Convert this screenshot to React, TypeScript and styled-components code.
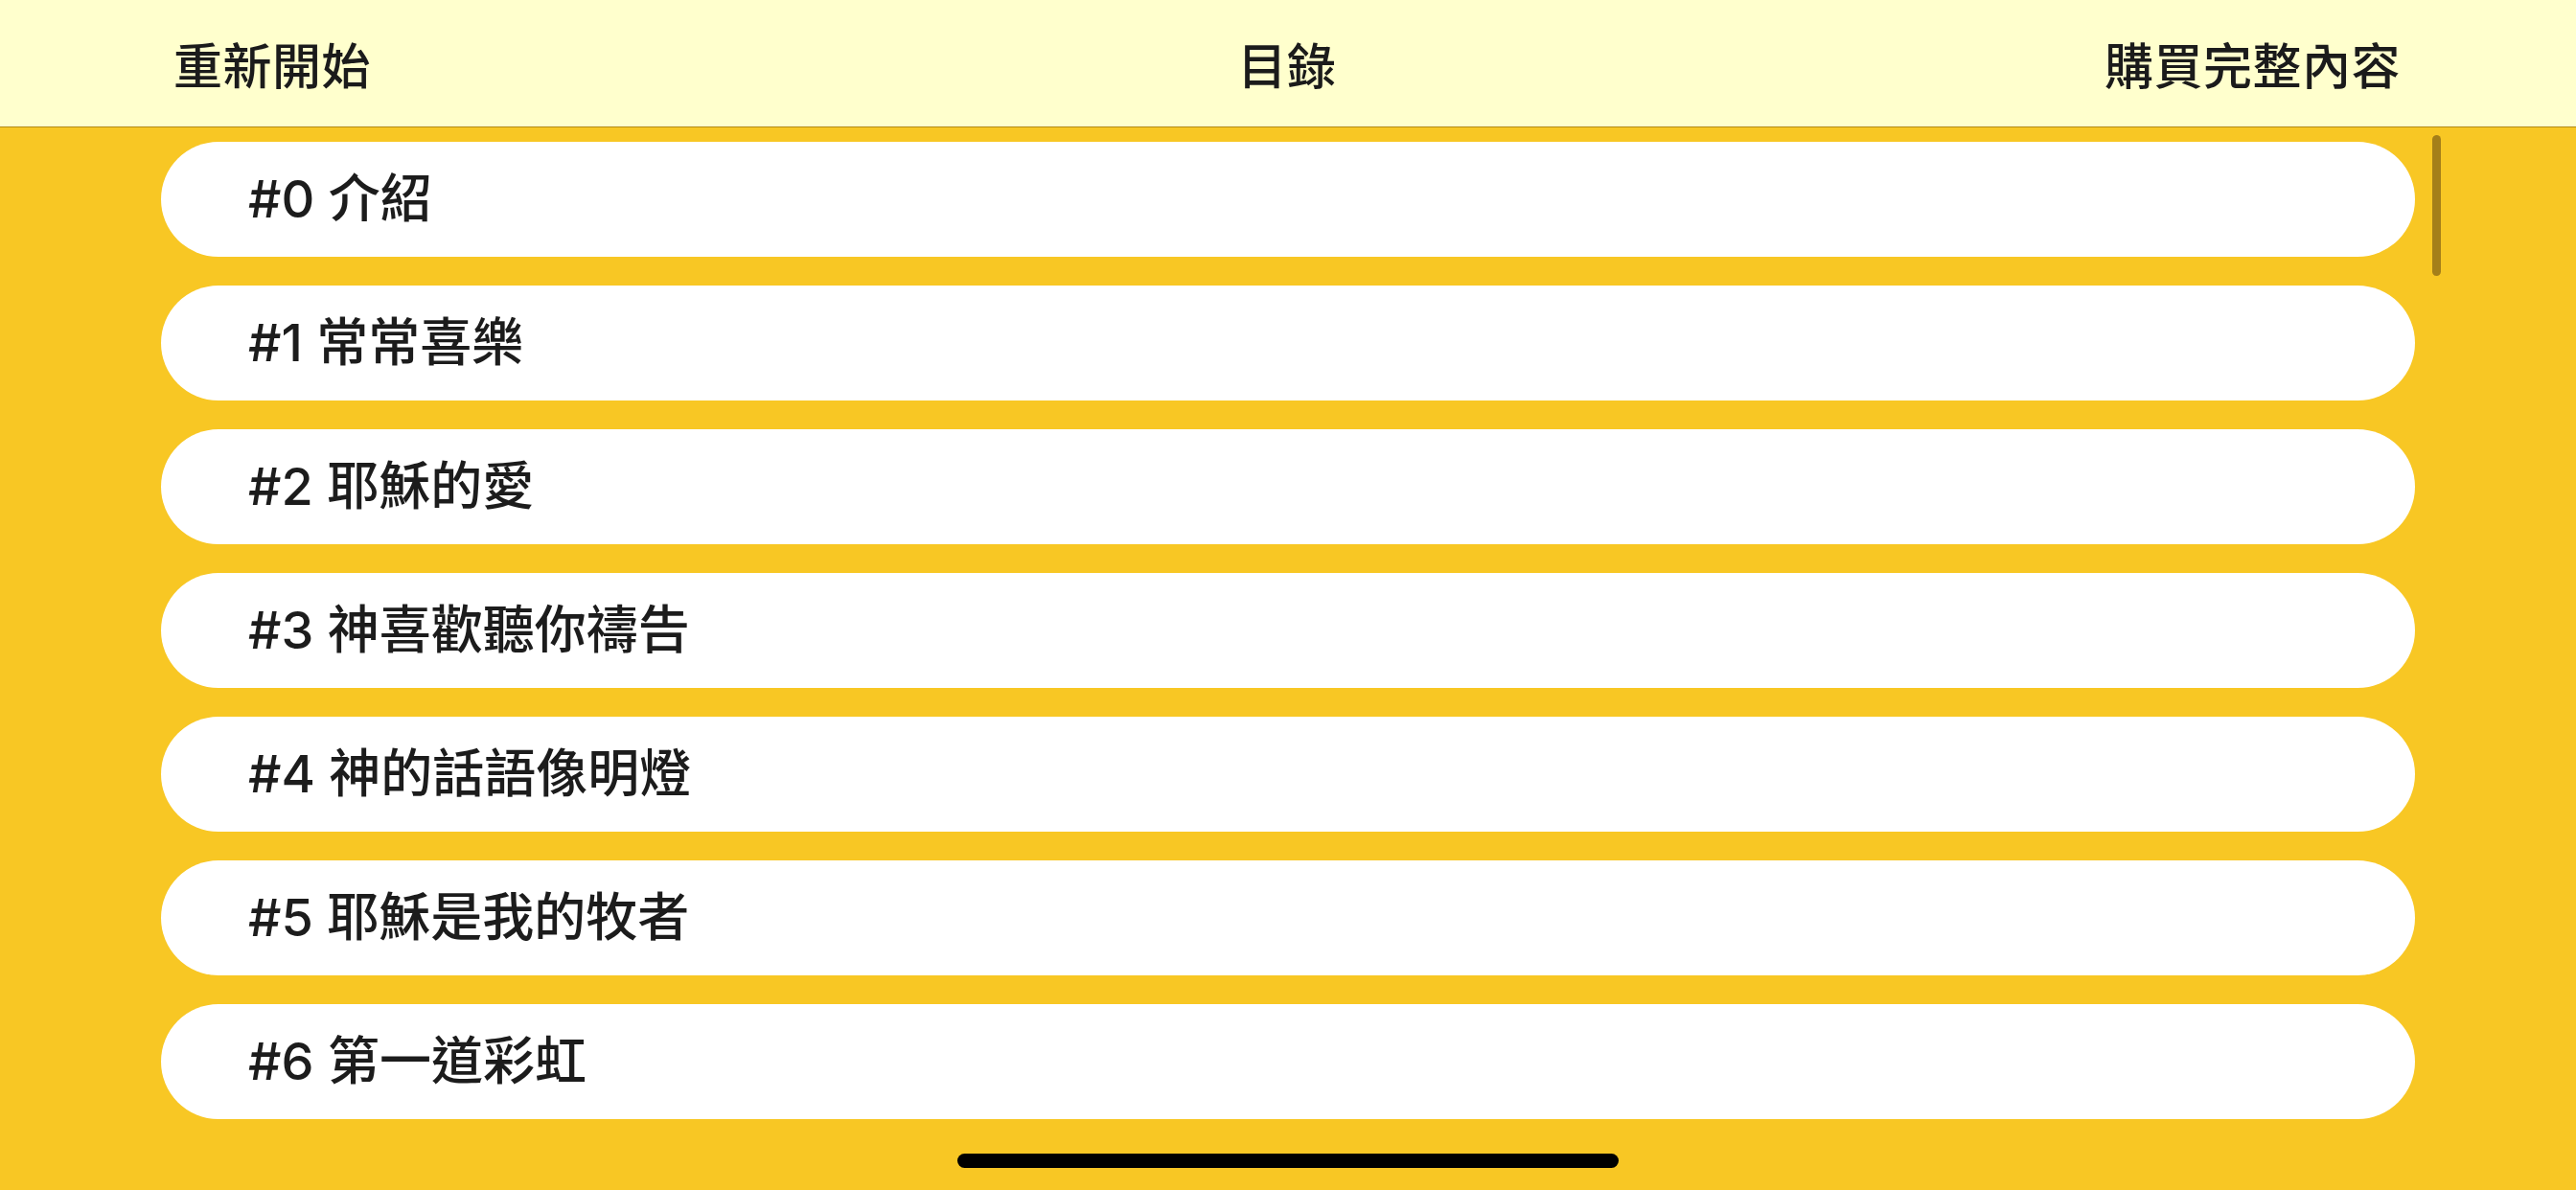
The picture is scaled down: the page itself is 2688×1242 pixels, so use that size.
import React from "react";
import styled, { createGlobalStyle } from "styled-components";

const Global = createGlobalStyle`
  html, body { margin: 0; padding: 0; }
  body {
    width: 2688px;
    height: 1242px;
    overflow: hidden;
    background: #f8c724;
    font-family: "Inter", "Noto Sans CJK TC", "Noto Sans", sans-serif;
  }
`;

const Screen = styled.div`
  position: relative;
  width: 2688px;
  height: 1242px;
  display: flex;
  flex-direction: column;
  background: #f8c724;
  overflow: hidden;
`;

const Header = styled.header`
  box-sizing: border-box;
  height: 133px;
  flex: 0 0 auto;
  background: #ffffcd;
  border-bottom: 1px solid #b28a17;
  display: grid;
  grid-template-columns: 1fr auto 1fr;
  align-items: center;
  padding: 0 183px 0 181px;
`;

const NavButton = styled.div<{ $align: "left" | "center" | "right" }>`
  font-family: "Noto Sans CJK TC", sans-serif;
  font-size: 51px;
  font-weight: 500;
  color: #1b1b1b;
  line-height: 1;
  justify-self: ${(p) => (p.$align === "left" ? "start" : p.$align === "right" ? "end" : "center")};
  letter-spacing: 0.5px;
`;

const ListArea = styled.main`
  position: relative;
  flex: 1 1 auto;
  overflow: hidden;
`;

const List = styled.ul`
  list-style: none;
  margin: 0;
  padding: 0 168px;
  display: flex;
  flex-direction: column;
`;

const Row = styled.li`
  box-sizing: border-box;
  height: 120px;
  margin: 15px 0;
  border-radius: 60px;
  background: #ffffff;
  display: flex;
  align-items: center;
  padding-left: 91px;
  font-family: "Inter", "Noto Sans CJK TC", sans-serif;
  font-size: 54px;
  font-weight: 500;
  color: #1c1c1c;
  line-height: 1;
`;

const ScrollThumb = styled.div`
  position: absolute;
  top: 8px;
  right: 141px;
  width: 9px;
  height: 147px;
  border-radius: 5px;
  background: #a47f19;
`;

const HomeIndicator = styled.div`
  position: absolute;
  left: 50%;
  bottom: 23px;
  transform: translateX(-50%);
  width: 690px;
  height: 15px;
  border-radius: 8px;
  background: #000;
`;

const chapters = [
  "#0 介紹",
  "#1 常常喜樂",
  "#2 耶穌的愛",
  "#3 神喜歡聽你禱告",
  "#4 神的話語像明燈",
  "#5 耶穌是我的牧者",
  "#6 第一道彩虹",
];

export default function App() {
  return (
    <Screen>
      <Global />
      <Header>
        <NavButton $align="left">重新開始</NavButton>
        <NavButton $align="center">目錄</NavButton>
        <NavButton $align="right">購買完整內容</NavButton>
      </Header>
      <ListArea>
        <List>
          {chapters.map((c) => (
            <Row key={c}>{c}</Row>
          ))}
        </List>
        <ScrollThumb />
      </ListArea>
      <HomeIndicator />
    </Screen>
  );
}
